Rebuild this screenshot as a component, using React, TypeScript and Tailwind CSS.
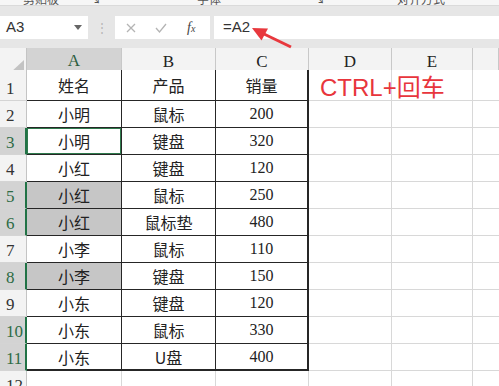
import React from 'react'

const rows = [
	['姓名', '产品', '销量'],
	['小明', '鼠标', '200'],
	['小明', '键盘', '320'],
	['小红', '键盘', '120'],
	['小红', '鼠标', '250'],
	['小红', '鼠标垫', '480'],
	['小李', '鼠标', '110'],
	['小李', '键盘', '150'],
	['小东', '键盘', '120'],
	['小东', '鼠标', '330'],
	['小东', 'U盘', '400'],
]

// rows whose header is highlighted, and A cells with selection fill
const selectedRows = [3, 5, 6, 8, 10, 11]
const shadedRows = [5, 6, 8]

const gridCols = 'grid grid-cols-[27px_95px_94px_93px_83px_81px_1fr]'
const cjk = "font-['Noto_Sans_CJK_SC','Noto_Sans',sans-serif]"
const serif = "font-['Liberation_Serif','DejaVu_Serif',serif]"

const RowHeader = ({ n, h }: { n: number; h: string }) => {
	const sel = selectedRows.includes(n)
	return (
		<div
			className={`${h} flex items-end px-[6px] pb-[3px] border-b border-[#d4d4d4] ${serif} text-[17px] leading-none ${
				sel
					? 'bg-[#d3d3d3] text-[#2e6b45] border-r-2 border-r-[#217346]'
					: 'bg-[#f3f3f3] text-[#333] border-r border-r-[#c4c4c4]'
			}`}
		>
			{n}
		</div>
	)
}

const DataRow = ({ n, cells }: { n: number; cells: string[] }) => {
	const h = n === 1 ? 'h-[31px]' : 'h-[27px]'
	const last = n === 11
	return (
		<div className={gridCols}>
			<RowHeader n={n} h={h} />
			{cells.map((c, i) => {
				const isNum = i === 2 && n > 1
				const shaded = i === 0 && shadedRows.includes(n)
				const active = i === 0 && n === 3
				return (
					<div
						key={i}
						className={`${h} flex items-center justify-center border-[#262626] ${
							last ? 'border-b-2' : 'border-b'
						} ${i === 2 ? 'border-r-2' : 'border-r'} ${
							shaded ? 'bg-[#c6c6c6]' : 'bg-white'
						} text-[16px] text-[#222] ${isNum ? serif : cjk}`}
					>
						{active ? (
							<div className="w-full h-full flex items-center justify-center border-[1.5px] border-[#2e7a4c]">
								{c}
							</div>
						) : (
							c
						)}
					</div>
				)
			})}
			<div className={`${h} border-r border-b border-[#d8d8d8] bg-white`} />
			<div className={`${h} border-r border-b border-[#d8d8d8] bg-white`} />
			<div className={`${h} border-b border-[#d8d8d8] bg-white`} />
		</div>
	)
}

export default function App() {
	return (
		<div className="relative w-[499px] h-[386px] overflow-hidden bg-white">
			{/* ribbon bottom edge */}
			<div className="h-[6px] overflow-hidden bg-[#f6f6f6] border-b border-[#dadada]">
				<div className={`flex -mt-[10px] text-[12px] text-[#555] ${cjk}`}>
					<span className="ml-[23px]">剪贴板</span>
					<span className="ml-[30px]">↘</span>
					<span className="ml-[96px]">字体</span>
					<span className="ml-[92px]">↘</span>
					<span className="ml-[72px]">对齐方式</span>
				</div>
			</div>

			{/* formula bar */}
			<div className="bg-[#e6e6e6] pt-[10px] pb-[9px]">
				<div className="flex h-[23px]">
					<div className="w-[88px] bg-white flex items-center justify-between pl-[6px] pr-[6px]">
						<span className="font-['Liberation_Sans',sans-serif] text-[15px] text-[#333]">A3</span>
						<svg width="8" height="5" viewBox="0 0 8 5">
							<path d="M0 0h8L4 5z" fill="#666" />
						</svg>
					</div>
					<div className="w-[27px] flex items-center justify-center text-[#b5b5b5] text-[12px]">⋮</div>
					<div className="w-[95px] bg-white flex items-center">
						<svg className="ml-[11px]" width="10" height="10" viewBox="0 0 10 10">
							<path d="M1 1l8 8M9 1l-8 8" stroke="#b4b4b4" strokeWidth="1.3" />
						</svg>
						<svg className="ml-[19px]" width="12" height="10" viewBox="0 0 12 10">
							<path d="M1 5l3.5 4L11 1" stroke="#b4b4b4" strokeWidth="1.3" fill="none" />
						</svg>
						<span className={`ml-[20px] ${serif} italic text-[14px] text-[#444]`}>
							f<span className="text-[10px]">x</span>
						</span>
					</div>
					<div className="ml-[4px] flex-1 bg-white flex items-center pl-[9px]">
						<span className="font-['Liberation_Sans',sans-serif] text-[15px] text-[#333]">=A2</span>
					</div>
				</div>
			</div>

			{/* column headers */}
			<div className={`${gridCols} h-[22px]`}>
				<div className="bg-[#f3f3f3] border-r border-b border-[#c4c4c4] flex items-end justify-end pr-[2px] pb-[2px]">
					<svg width="14" height="13" viewBox="0 0 14 13">
						<path d="M14 0V13H0z" fill="#c3c3c3" />
					</svg>
				</div>
				{['A', 'B', 'C', 'D', 'E', ''].map((l, i) => (
					<div
						key={i}
						className={`flex items-center justify-center ${serif} text-[17px] border-r border-r-[#c8c8c8] ${
							i === 0
								? 'bg-[#d3d3d3] text-[#2e5e40] border-b-2 border-b-[#217346]'
								: 'bg-[#f3f3f3] text-[#222] border-b border-b-[#9a9a9a]'
						}`}
					>
						{l}
					</div>
				))}
			</div>

			{rows.map((r, i) => (
				<DataRow key={i} n={i + 1} cells={r} />
			))}

			{/* row 12 */}
			<div className={gridCols}>
				<RowHeader n={12} h="h-[27px]" />
				<div className="h-[27px] border-r border-[#d8d8d8]" />
				<div className="h-[27px] border-r border-[#d8d8d8]" />
				<div className="h-[27px] border-r border-[#d8d8d8]" />
				<div className="h-[27px] border-r border-[#d8d8d8]" />
				<div className="h-[27px] border-r border-[#d8d8d8]" />
				<div className="h-[27px]" />
			</div>

			{/* annotation */}
			<div className="absolute left-[320px] top-[76px] font-['Liberation_Sans','Noto_Sans_CJK_SC',sans-serif] text-[24px] text-[#e8353c] leading-none">
				CTRL+回车
			</div>
			<svg className="absolute left-0 top-0 pointer-events-none" width="499" height="386">
				<line x1="291" y1="47" x2="264" y2="34" stroke="#e8383d" strokeWidth="3" />
				<polygon points="252,28 268,28.5 261.5,40.5" fill="#e8383d" />
			</svg>
		</div>
	)
}
